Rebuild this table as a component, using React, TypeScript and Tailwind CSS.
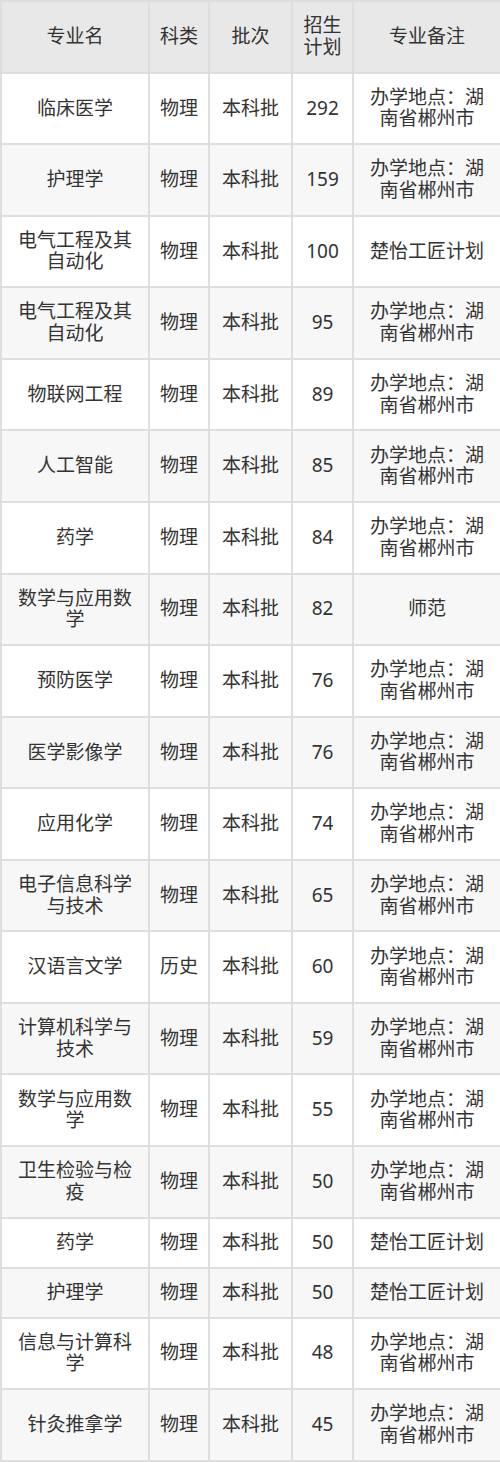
import React from "react";

const rows: [string, string, string, string, string][] = [
  ["临床医学", "物理", "本科批", "292", "办学地点：湖南省郴州市"],
  ["护理学", "物理", "本科批", "159", "办学地点：湖南省郴州市"],
  ["电气工程及其自动化", "物理", "本科批", "100", "楚怡工匠计划"],
  ["电气工程及其自动化", "物理", "本科批", "95", "办学地点：湖南省郴州市"],
  ["物联网工程", "物理", "本科批", "89", "办学地点：湖南省郴州市"],
  ["人工智能", "物理", "本科批", "85", "办学地点：湖南省郴州市"],
  ["药学", "物理", "本科批", "84", "办学地点：湖南省郴州市"],
  ["数学与应用数学", "物理", "本科批", "82", "师范"],
  ["预防医学", "物理", "本科批", "76", "办学地点：湖南省郴州市"],
  ["医学影像学", "物理", "本科批", "76", "办学地点：湖南省郴州市"],
  ["应用化学", "物理", "本科批", "74", "办学地点：湖南省郴州市"],
  ["电子信息科学与技术", "物理", "本科批", "65", "办学地点：湖南省郴州市"],
  ["汉语言文学", "历史", "本科批", "60", "办学地点：湖南省郴州市"],
  ["计算机科学与技术", "物理", "本科批", "59", "办学地点：湖南省郴州市"],
  ["数学与应用数学", "物理", "本科批", "55", "办学地点：湖南省郴州市"],
  ["卫生检验与检疫", "物理", "本科批", "50", "办学地点：湖南省郴州市"],
  ["药学", "物理", "本科批", "50", "楚怡工匠计划"],
  ["护理学", "物理", "本科批", "50", "楚怡工匠计划"],
  ["信息与计算科学", "物理", "本科批", "48", "办学地点：湖南省郴州市"],
  ["针灸推拿学", "物理", "本科批", "45", "办学地点：湖南省郴州市"],
];

const headers = ["专业名", "科类", "批次", "招生计划", "专业备注"];

export default function App() {
  const cell =
    "border-2 border-[#dedede] px-[8px] py-[13.2px] text-center align-middle leading-[21.6px] break-all";
  return (
    <div
      className="w-[500px] bg-white text-[#333333] text-[19px]"
      style={{ fontFamily: '"Noto Sans", "Noto Sans CJK SC", sans-serif' }}
    >
      <table className="w-[500px] table-fixed border-collapse">
        <colgroup>
          <col className="w-[148px]" />
          <col className="w-[60px]" />
          <col className="w-[83px]" />
          <col className="w-[61px]" />
          <col className="w-[148px]" />
        </colgroup>
        <thead>
          <tr className="bg-[#e8e8e8]">
            {headers.map((h) => (
              <th key={h} className={cell + " font-normal"}>
                {h}
              </th>
            ))}
          </tr>
        </thead>
        <tbody>
          {rows.map((r, i) => (
            <tr key={i} className={i % 2 === 1 ? "bg-[#f7f7f7]" : "bg-white"}>
              {r.map((c, j) => (
                <td key={j} className={cell}>
                  {c}
                </td>
              ))}
            </tr>
          ))}
        </tbody>
      </table>
    </div>
  );
}
